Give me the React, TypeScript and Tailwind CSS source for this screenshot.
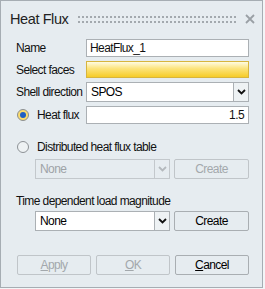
const font = "font-['Liberation_Sans',Arial,sans-serif]";

function Chevron({ disabled }: { disabled?: boolean }) {
  return (
    <svg width="9" height="6" viewBox="0 0 9 6">
      <path
        d="M1 1 L4.5 4.5 L8 1"
        fill="none"
        stroke={disabled ? "#b4b9bd" : "#111"}
        strokeWidth="1.8"
      />
    </svg>
  );
}

function Radio({ checked }: { checked?: boolean }) {
  return (
    <div
      className={`w-[12px] h-[12px] rounded-full border flex items-center justify-center ${
        checked
          ? "border-[#8a8f94] bg-[#fbdc6e]"
          : "border-[#8d9296] bg-[#eef2f4]"
      }`}
    >
      {checked && <div className="w-[6px] h-[6px] rounded-full bg-[#1f5fc4]" />}
    </div>
  );
}

function Select({
  value,
  disabled,
  className,
}: {
  value: string;
  disabled?: boolean;
  className: string;
}) {
  return (
    <div className={`flex ${className}`}>
      <div
        className={`flex-1 flex items-center pl-[4px] border ${
          disabled
            ? "border-[#c3c8cc] bg-[#e6ecf0] text-[#9ea3a7]"
            : "border-[#abb0b4] bg-white text-black"
        }`}
      >
        {value}
      </div>
      <div
        className={`w-[15px] flex items-center justify-center border border-l-0 ${
          disabled ? "border-[#c3c8cc] bg-[#e6ecf0]" : "border-[#abb0b4] bg-[#eef2f4]"
        }`}
      >
        <Chevron disabled={disabled} />
      </div>
    </div>
  );
}

function Button({
  children,
  disabled,
  className,
}: {
  children: React.ReactNode;
  disabled?: boolean;
  className: string;
}) {
  return (
    <div
      className={`flex items-center justify-center rounded-[2px] border ${
        disabled
          ? "border-[#c0c5c9] text-[#a3a8ac]"
          : "border-[#a9aeb2] text-black"
      } bg-[#e6ecf0] ${className}`}
    >
      {children}
    </div>
  );
}

// drag handle: two rows of small dots
function Grip() {
  return (
    <svg width="160" height="7" viewBox="0 0 160 7">
      <defs>
        <pattern id="grip" width="4" height="5" patternUnits="userSpaceOnUse">
          <rect x="0" y="0" width="2" height="2" fill="#a3a9ae" />
        </pattern>
      </defs>
      <rect x="0" y="0" width="160" height="7" fill="url(#grip)" />
    </svg>
  );
}

export default function App() {
  return (
    <div className={`w-[265px] h-[289px] bg-[#f3f5f7] ${font}`}>
      <div className="w-[263px] h-[288px] border border-[#a6adb3] bg-[#e6ecf0] text-[12px] tracking-[-0.6px] text-[#111] leading-none">
        {/* title bar */}
        <div className="h-[33px] flex items-center pl-[9px] pt-[3px] whitespace-nowrap">
          <span className="w-[68px] shrink-0 text-[14.5px] tracking-[-0.4px] text-[#222]">
            Heat Flux
          </span>
          <div className="pt-[1px] flex">
            <Grip />
          </div>
          <svg className="ml-[7px] shrink-0" width="10" height="10" viewBox="0 0 10 10">
            <path d="M1 1 L9 9 M9 1 L1 9" stroke="#9aa0a5" strokeWidth="1.8" />
          </svg>
        </div>

        <div className="pl-[15px] pr-[13px]">
          {/* Name */}
          <div className="mt-[5px] flex items-center h-[18px]">
            <span className="w-[70px]">Name</span>
            <div className="flex-1 h-full border border-[#abb0b4] bg-white flex items-center pl-[3px]">
              HeatFlux_1
            </div>
          </div>

          {/* Select faces */}
          <div className="mt-[4px] flex items-center h-[17px]">
            <span className="w-[70px]">Select faces</span>
            <div className="flex-1 h-full border border-[#d7b53e] bg-[linear-gradient(#fffbe2,#fce37a_45%,#f6cc28)]" />
          </div>

          {/* Shell direction */}
          <div className="mt-[4px] flex items-center h-[20px]">
            <span className="w-[70px]">Shell direction</span>
            <Select value="SPOS" className="flex-1 h-full" />
          </div>

          {/* Heat flux */}
          <div className="mt-[4px] flex items-center h-[18px]">
            <div className="w-[70px] flex items-center pl-[1px] gap-[8px]">
              <Radio checked />
              <span>Heat flux</span>
            </div>
            <div className="flex-1 h-full border border-[#abb0b4] bg-white flex items-center justify-end pr-[4px]">
              1.5
            </div>
          </div>

          {/* Distributed */}
          <div className="mt-[15px] flex items-center h-[16px] pl-[1px] gap-[8px]">
            <Radio />
            <span>Distributed heat flux table</span>
          </div>
          <div className="mt-[4px] flex h-[20px] pl-[19px] gap-[4px]">
            <Select value="None" disabled className="w-[135px] h-full" />
            <Button disabled className="flex-1 h-full">Create</Button>
          </div>

          {/* Time dependent */}
          <div className="mt-[14px] h-[16px] flex items-center">
            Time dependent load magnitude
          </div>
          <div className="mt-[2px] flex h-[20px] pl-[19px] gap-[4px]">
            <Select value="None" className="w-[135px] h-full" />
            <Button className="flex-1 h-full">Create</Button>
          </div>

          {/* Actions */}
          <div className="mt-[24px] flex h-[20px] pl-[1px] gap-[5px]">
            <Button disabled className="w-[74px] h-full">
              <span><u>A</u>pply</span>
            </Button>
            <Button disabled className="w-[74px] h-full">
              <span><u>O</u>K</span>
            </Button>
            <Button className="flex-1 h-full">
              <span><u>C</u>ancel</span>
            </Button>
          </div>
        </div>
      </div>
    </div>
  );
}
